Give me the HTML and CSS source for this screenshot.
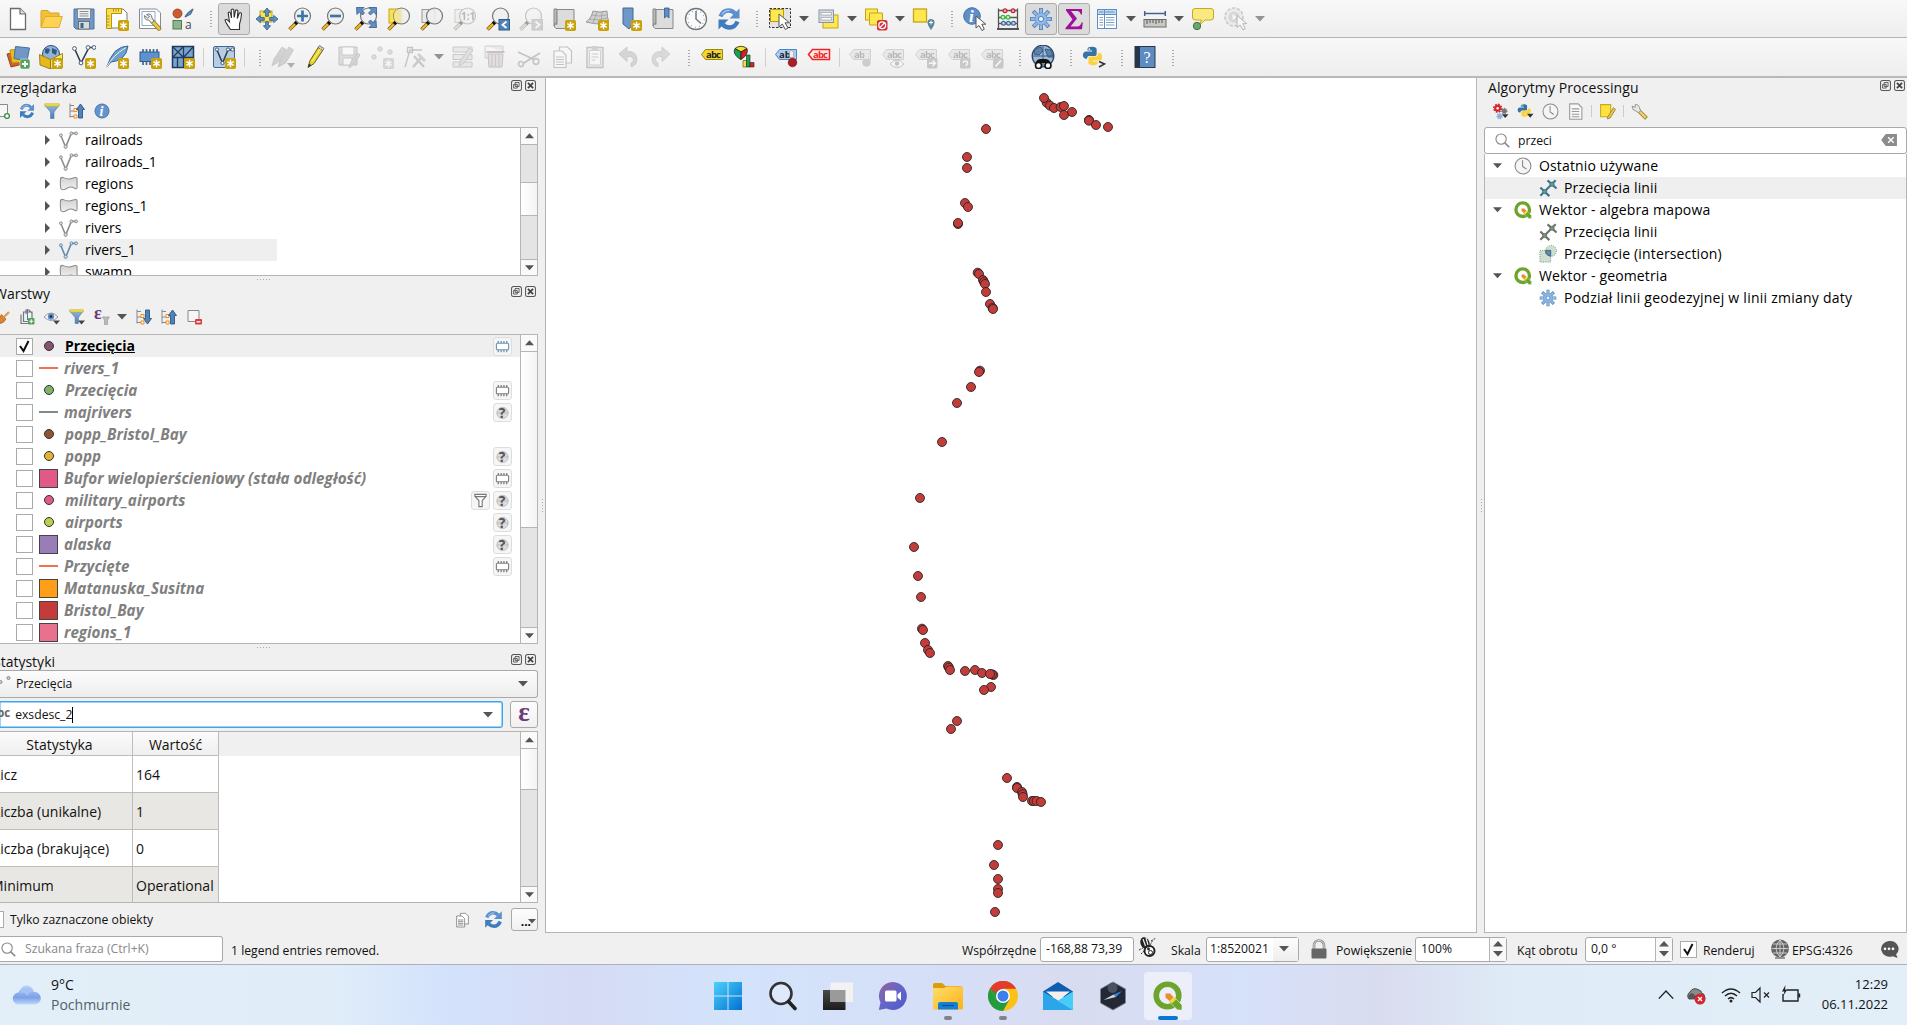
FILE: index.html
```html
<!DOCTYPE html>
<html lang="pl">
<head>
<meta charset="utf-8">
<title>QGIS</title>
<link rel="stylesheet" href="styles.css">
</head>
<body>
<svg class="paints" aria-hidden="true">
  <defs>
    <linearGradient id="gBlue" x1="0" y1="0" x2="0" y2="1"><stop offset="0" stop-color="#8fb4dc"/><stop offset="1" stop-color="#4c7db8"/></linearGradient>
    <linearGradient id="gPoly" x1="0" y1="0" x2="0" y2="1"><stop offset="0" stop-color="#d2d2d2"/><stop offset="1" stop-color="#f0f0f0"/></linearGradient>
    <linearGradient id="gWin" x1="0" y1="0" x2="1" y2="1"><stop offset="0" stop-color="#4cd2fb"/><stop offset="1" stop-color="#0170d2"/></linearGradient>
    <linearGradient id="gChat" x1="0" y1="0" x2="1" y2="1"><stop offset="0" stop-color="#9a5f9c"/><stop offset=".5" stop-color="#6267c8"/><stop offset="1" stop-color="#4f57c4"/></linearGradient>
    <linearGradient id="gFold" x1="0" y1="0" x2="1" y2="1"><stop offset="0" stop-color="#ffdc6e"/><stop offset="1" stop-color="#fbb414"/></linearGradient>
    <linearGradient id="gCloud" x1="0" y1="0" x2="0" y2="1"><stop offset="0" stop-color="#a9c3f3"/><stop offset=".6" stop-color="#7ba1e8"/><stop offset="1" stop-color="#c0d8fa"/></linearGradient>
    <linearGradient id="gDark" x1="0" y1="0" x2="0" y2="1"><stop offset="0" stop-color="#4a4a48"/><stop offset="1" stop-color="#1c1c1c"/></linearGradient>
  </defs>
</svg>
<svg class="symbols" aria-hidden="true">
  <symbol id="badge" viewBox="0 0 24 24"><rect x="13" y="13" width="11" height="11" rx="1.8" fill="#c8a30c"/><path d="M18.5 14.8v7.4M15.3 16.6l6.4 3.8M21.7 16.6l-6.4 3.8" stroke="#fff" stroke-width="1.5"/></symbol>
  <symbol id="new" viewBox="0 0 24 24"><path d="M4.5 1.5h9.5l5.5 5.5v15.500H4.500z" fill="#fff" stroke="#6b6b6b" stroke-width="1.3"/><path d="M14 1.500V7h5.500" fill="#ddd" stroke="#6b6b6b" stroke-width="1.200"/></symbol>
  <symbol id="open" viewBox="0 0 24 24"><path d="M2 20V4.500q0-1 1-1h6l2 2.500h9v4" fill="#f0bf3c" stroke="#d9a520"/><path d="M2 20.500L6 9.500h17.300L20 20.500z" fill="#fcd354" stroke="#dfae2e"/></symbol>
  <symbol id="save" viewBox="0 0 24 24"><path d="M2 2h20v20H4l-2-2z" fill="#6f98c8" stroke="#4b749f"/><rect x="5.500" y="2" width="13" height="9.500" fill="#f4f4f4" stroke="#6a6a6a" stroke-width=".7"/><path d="M7.500 4.500h9M7.500 6.800h9M7.500 9h9" stroke="#8a8a8a"/><rect x="6.500" y="14.500" width="11" height="7.500" fill="#dadada" stroke="#555" stroke-width=".7"/><rect x="8.500" y="16" width="3" height="5" fill="#3c6490"/></symbol>
  <symbol id="layout" viewBox="0 0 24 24"><path d="M2 2h16l4 4v15H2z" fill="#fff" stroke="#777"/><path d="M1.500 1.500h15v5H6.500v15h-5z" fill="#f8dc51" stroke="#b8960c"/><path d="M8.500 2v2.500M11 2v2.500M13.500 2v2.500M2 9h2.500M2 12h2.500M2 15h2.500M2 18h2.500" stroke="#9a7d10" stroke-width=".8"/><use href="#badge"/></symbol>
  <symbol id="layman" viewBox="0 0 24 24"><path d="M1.500 2h17l4 4v15.500h-21z" fill="#fff" stroke="#8a8a8a"/><path d="M4 4.500h13v14H4z" fill="#fff" stroke="#6f98c8" stroke-width=".8"/><path d="M14.500 14.500l6.500 7" stroke="#8a6d1c" stroke-width="4.400" stroke-linecap="round"/><path d="M14.500 14.500l6.500 7" stroke="#e9c94c" stroke-width="2.800" stroke-linecap="round"/><path d="M8.500 7.500q5-2 5.500 3.500l2 3-2.500 2-3-3q-4 .5-4-4.500l3 2.500 2-1.500z" fill="#eee" stroke="#777"/></symbol>
  <symbol id="style" viewBox="0 0 24 24"><circle cx="6.500" cy="6.500" r="4.500" fill="#cf5a31" stroke="#8d3b1c" stroke-width=".8"/><path d="M14 10l3-4 5-4-2.500 5z" stroke="#4c7099" fill="#7a9fc8" stroke-width="1.400"/><rect x="2" y="13.500" width="8.500" height="8.500" fill="#8fb58f" stroke="#4c7c50"/><text x="14" y="22" font-size="12" fill="#444">a</text></symbol>
  <symbol id="hand" viewBox="0 0 24 24"><path d="M8.500 23C6 19 3.500 16.500 3 13.500q1.500-1.500 3.500 1l1 1-1.300-9q1-2 2.300.3l1 4.700-.3-8q1.500-2 2.600 0l.4 7.500 1.300-7q1.800-1.400 2.400.5l-.6 7.500 2-5.500q1.800-.8 2.200 1-.3 5.500-2 10v5.500z" transform="translate(0 -.5)" fill="#fff" stroke="#333" stroke-width="1.100"/></symbol>
  <symbol id="panto" viewBox="0 0 24 24"><rect x="5" y="4" width="12" height="11" fill="#fbe24c" stroke="#c5a41a"/><path d="M12 1l3.600 4.300h-2.200v4h-2.800v-4H8.400zM12 23l3.600-4.300h-2.200v-4h-2.800v4H8.400zM1 12l4.300-3.600v2.200h4v2.800h-4v2.200zM23 12l-4.300-3.600v2.200h-4v2.800h4v2.200z" fill="#5f8fc4" stroke="#2d5a8c" stroke-width=".8"/></symbol>
  <symbol id="glass" viewBox="0 0 24 24"><path d="M1.500 22.500l7-7" stroke="#7a5c12" stroke-width="3.600"/><path d="M1.800 22.200l5.500-5.500" stroke="#f3b92c" stroke-width="2"/><path d="M7 17l2-2" stroke="#111" stroke-width="3.600"/><circle cx="14.500" cy="9" r="8" fill="#efefef" fill-opacity=".85" stroke="#777" stroke-width="1.200"/></symbol>
  <symbol id="zin" viewBox="0 0 24 24"><use href="#glass"/><path d="M14.500 3.500v11M9 9h11" stroke="#3f73ab" stroke-width="2.700"/></symbol>
  <symbol id="zout" viewBox="0 0 24 24"><use href="#glass"/><path d="M9 9h11" stroke="#3f73ab" stroke-width="2.700"/></symbol>
  <symbol id="zfull" viewBox="0 0 24 24"><use href="#glass"/><path d="M2.500.5h7.500L7.500 3l3 3-2 2-3-3L3 7.500zM22.500.5H15L17.500 3l-3 3 2 2 3-3L22.500 7.500zM22.500 20.500H15l2.500-2.500-3-3 2-2 3 3 2.500-2.500z" fill="#5f8fc4" stroke="#2f5c8f" stroke-width=".8"/></symbol>
  <symbol id="zsel" viewBox="0 0 24 24"><rect x="2" y="2" width="13" height="14" fill="#fbe24c" stroke="#c5a41a"/><use href="#glass"/><path d="M14 2.500v13h-5q-5-6.500 0-13z" fill="#f1e28c" opacity=".8"/></symbol>
  <symbol id="zlay" viewBox="0 0 24 24"><rect x="2" y="2.500" width="13" height="13" fill="#e8e8e8" stroke="#999"/><use href="#glass"/></symbol>
  <symbol id="znat" viewBox="0 0 24 24"><rect x="2" y="2.500" width="13" height="13" fill="#e8e8e8" stroke="#999"/><use href="#glass"/><text x="8" y="13" font-size="10" font-weight="700" fill="#555">1:1</text></symbol>
  <symbol id="zlast" viewBox="0 0 24 24"><use href="#glass"/><rect x="13" y="12.500" width="10.500" height="10.500" fill="#4f84b8" stroke="#2f5c8f"/><path d="M20.500 14.500l-4 3.300 4 3.200" fill="none" stroke="#fff" stroke-width="1.800"/></symbol>
  <symbol id="znext" viewBox="0 0 24 24"><use href="#glass"/><rect x="13" y="12.500" width="10.500" height="10.500" fill="#999" stroke="#888"/><path d="M16.500 14.500l4 3.300-4 3.200" fill="none" stroke="#fff" stroke-width="1.800"/></symbol>
  <symbol id="map" viewBox="0 0 24 24"><path d="M2 2h3v14q-3 0-3 3z" fill="#bbb" stroke="#888"/><path d="M5 2.500h17v19H4q-2-1-1.500-4 2-1 2.500 0z" fill="#dcdcdc" stroke="#888"/></symbol>
  <symbol id="newmap" viewBox="0 0 24 24"><use href="#map"/><use href="#badge"/></symbol>
  <symbol id="new3d" viewBox="0 0 24 24"><path d="M1 15Q6 12 8 4q7 2 14 0 0 7 2 11-7 4-23 0z" fill="#d0d0d0" stroke="#999"/><path d="M4 12q9 2 19-1M6.500 8q8 2 15 0M12 5l-4 11M17 5l-1 12" fill="none" stroke="#999" stroke-width=".7"/><use href="#badge"/></symbol>
  <symbol id="newbook" viewBox="0 0 24 24"><path d="M5 1h10v16l-4 5-6-5z" fill="#6f98c8" stroke="#3f6895"/><use href="#badge"/></symbol>
  <symbol id="book" viewBox="0 0 24 24"><use href="#map"/><path d="M13.500 1h4.500v10l-2.200-2-2.300 2z" fill="#5f8fc4" stroke="#2f5c8f" stroke-width=".8"/></symbol>
  <symbol id="clock" viewBox="0 0 24 24"><circle cx="12" cy="12" r="10.500" fill="#fbfbfb" stroke="#777" stroke-width="1.300"/><circle cx="12" cy="12" r="8.200" fill="none" stroke="#8ab0d8" stroke-width="1.300" stroke-dasharray="1 3.290"/><path d="M12 4v8l5 4.500" fill="none" stroke="#777" stroke-width="1.500"/></symbol>
  <symbol id="refresh" viewBox="0 0 24 24"><path d="M3.500 9.500Q6 3.500 11.500 3.500q4 0 6.500 3" fill="none" stroke="#5b90cc" stroke-width="4.400"/><path d="M22.500 1.500v10h-10z" fill="#5b90cc"/><path d="M20.500 14.500Q18 20.500 12.500 20.500q-4 0-6.500-3" fill="none" stroke="#3f7cbe" stroke-width="4.400"/><path d="M1.500 22.500v-10h10z" fill="#3f7cbe"/><path d="M5 7.500Q7.500 3 13 3.500" fill="none" stroke="#a9caec" stroke-width="1.200"/></symbol>
  <symbol id="cursor" viewBox="0 0 24 24"><path d="M12 8.500v12l3-2.500 3 5 2.300-1.300-2.500-5h4z" fill="#fff" stroke="#555"/></symbol>
  <symbol id="select" viewBox="0 0 24 24"><rect x="1.500" y="1.500" width="21" height="19" fill="#e4e4e4" stroke="#333" stroke-dasharray="2.500 1.500"/><rect x="2.500" y="2.500" width="13" height="12" fill="#fde94f" stroke="#b99d19"/><path d="M11 7v13l3.300-3 3 5.500 2.700-1.500-3-5.200h4.500z" fill="#fff" stroke="#555"/></symbol>
  <symbol id="selval" viewBox="0 0 24 24"><rect x="7" y="8" width="15" height="13" fill="#fde94f" stroke="#c5a41a"/><rect x="3" y="3" width="14.500" height="12.500" fill="#d8dde6" stroke="#8793a6"/><path d="M5 5.500h10.500v2.500H5zM5 10.500h10.500v2.500H5z" fill="#fff" stroke="#999" stroke-width=".7"/></symbol>
  <symbol id="desel" viewBox="0 0 24 24"><rect x="1.500" y="2" width="12" height="11" fill="#fde94f" stroke="#c5a41a"/><path d="M5.500 6h13v12h-13z" fill="#fde94f" stroke="#c5a41a"/><rect x="13" y="13" width="10.500" height="10.500" rx="2" fill="#d8323b"/><circle cx="18.200" cy="18.200" r="3.400" fill="none" stroke="#fff" stroke-width="1.300"/><path d="M15.800 20.600l4.800-4.800" stroke="#fff" stroke-width="1.300"/></symbol>
  <symbol id="selpin" viewBox="0 0 24 24"><rect x="1.500" y="2" width="13" height="13" fill="#fde94f" stroke="#c5a41a" stroke-width="1.300"/><path d="M19 23q-3.500-5-3.500-7.500a3.500 3.500 0 0 1 7 0Q22.500 18 19 23z" fill="#5c8599"/><path d="M19 13.500v4M17 15.500h4" stroke="#fff"/></symbol>
  <symbol id="ident" viewBox="0 0 24 24"><circle cx="9" cy="9" r="8.300" fill="#5f8fc8" stroke="#4171a8"/><text x="6" y="15" font-family="Liberation Serif" font-style="italic" font-weight="700" font-size="17" fill="#fff">i</text><use href="#cursor" x="1" y=".5"/></symbol>
  <symbol id="abac" viewBox="0 0 24 24"><path d="M2.500 1.500v20M21.500 1.500v20M2.500 3.500h19M2.500 10.500h19M2.500 16.500h19" fill="none" stroke="#555" stroke-width="1.300"/><path d="M1 21h22v2H1z" fill="#555"/><g stroke-width="1.200"><g fill="#f6a5a5" stroke="#c23"><circle cx="9" cy="3.800" r="1.900"/><circle cx="17" cy="3.800" r="1.900"/></g><g fill="#c5f3bf" stroke="#3b4"><circle cx="7" cy="10.300" r="1.900"/><circle cx="12" cy="10.300" r="1.900"/></g><g fill="#bcd9ee" stroke="#469"><circle cx="7.500" cy="16.300" r="1.900"/><circle cx="12.500" cy="16.300" r="1.900"/><circle cx="17.500" cy="16.300" r="1.900"/></g></g></symbol>
  <symbol id="gear" viewBox="0 0 24 24"><g stroke="#4f83bd" stroke-width="4"><path d="M12 1v22M1 12h22M4.200 4.200l15.600 15.600M19.800 4.200L4.200 19.800"/></g><g stroke="#93b8e4" stroke-width="2.400"><path d="M12 1.800v20.400M1.800 12h20.400M4.800 4.800l14.400 14.400M19.200 4.800L4.800 19.200"/></g><circle cx="12" cy="12" r="6" fill="#93b8e4" stroke="#6a98cf" stroke-width=".7"/><circle cx="12" cy="12" r="2.600" fill="#eaf1fa" stroke="#4f83bd"/></symbol>
  <symbol id="sigma" viewBox="0 0 24 24"><path d="M4 2h16v5.500h-1.200Q18 4 15 4H9l6 7.500L8.500 19.500H15q3.500 0 4.500-4h1.300L20 22.300H3.500v-1.300l7-8.500L4 3.500z" fill="#a0109c"/></symbol>
  <symbol id="table" viewBox="0 0 24 24"><rect x="2.500" y="2.500" width="19" height="19" fill="#fff" stroke="#5d8fc2"/><path d="M3 3h18v4H3z" fill="#c3daf0"/><path d="M4 5h4.500M10.500 5h9M2.500 7.500h19M9.500 3v18" stroke="#5d8fc2"/><path d="M4.500 10.500h3.500M11 10.500h8.500M4.500 13h3.500M11 13h8.500M4.500 15.500h3.500M11 15.500h8.500M4.500 18h3.500M11 18h8.500" stroke="#7ba3cd" stroke-width="1.200"/></symbol>
  <symbol id="ruler" viewBox="0 0 24 24"><path d="M2 6.500h20M1.700 4v5M22.300 4v5" stroke="#42658c" stroke-width="1.500"/><rect x="1" y="12.500" width="22" height="7.500" fill="#c9c9c4" stroke="#6a6a6a"/><path d="M4 13v4M7 13v3M10 13v3M13 13v4M16 13v3M19 13v3" stroke="#555"/></symbol>
  <symbol id="tip" viewBox="0 0 24 24"><path d="M4 1.500h16q2.500 0 2.500 2.500v6q0 3-2.500 3h-6L8 18.500 10.500 13H4q-2.500 0-2.500-3V4Q1.500 1.500 4 1.500z" fill="#f8ea80" stroke="#c9a91c"/><circle cx="6" cy="19" r="3.700" fill="#6aa56c" stroke="#3b7a44"/></symbol>
  <symbol id="action" viewBox="0 0 24 24"><circle cx="10" cy="10" r="9" fill="#ddd" stroke="#888" stroke-width="1.600" stroke-dasharray="3.500 1.500"/><circle cx="10" cy="10" r="5.500" fill="#aaa"/><path d="M8.500 7v6l4.500-3z" fill="#fff"/><use href="#cursor" x="1"/></symbol>

  <symbol id="dsm" viewBox="0 0 24 24"><path d="M1 9l13-3 3 13-12 3z" fill="#cd5f33" stroke="#9c4420"/><path d="M4 5l13-1 1 13-12 1z" fill="#eebd18" stroke="#b68d0d"/><path d="M9.500 1.500L23.500 3 21 16 8 13.500z" fill="#6f98c8" stroke="#456f9f"/><rect x="14" y="14" width="10" height="10" rx="2" fill="#58a05a" stroke="#fff" stroke-width=".5"/><path d="M19 16v6M16 19h6" stroke="#fff" stroke-width="1.800"/></symbol>
  <symbol id="gpkg" viewBox="0 0 24 24"><circle cx="12" cy="9" r="8.500" fill="#8fb4dc" stroke="#2d4f75"/><path d="M6 4q4-2 5 1l-2 4-3-1zM13 3l5 2-1 5-4-2z" fill="#35587f"/><path d="M.5 9.500l11 5V24L1 20z" fill="#e5b81c" stroke="#8a6d10" stroke-width=".8"/><path d="M11.500 14.500l12-6V20l-12 4z" fill="#fbe668" stroke="#8a6d10" stroke-width=".8"/><use href="#badge"/></symbol>
  <symbol id="vec" viewBox="0 0 24 24"><path d="M2.500 3.500L9 18 17 2.500h5" fill="none" stroke="#2c3e50" stroke-width="1.600"/><g fill="#fff" stroke="#445c78"><circle cx="2.500" cy="3.500" r="1.900"/><circle cx="9" cy="18" r="1.900"/><circle cx="16" cy="2.500" r="1.900"/><circle cx="22" cy="2.500" r="1.900"/></g></symbol>
  <symbol id="newvec" viewBox="0 0 24 24"><use href="#vec"/><use href="#badge"/></symbol>
  <symbol id="feather" viewBox="0 0 24 24"><path d="M1.500 22.500Q5 12 10 6.500 16 1 23 1q-1 8-6 12-6 4-11 4z" fill="#6f9fce" stroke="#3a6796"/><path d="M1 23Q8 10 21 2.500" fill="none" stroke="#e8f0f8"/><use href="#badge"/></symbol>
  <symbol id="chip" viewBox="0 0 24 24"><path d="M5 4v16M8.500 4v16M12 4v16M15.500 4v16M19 4v16" stroke="#46698f" stroke-width="1.700"/><rect x="2" y="7" width="19" height="9.500" fill="#5f92cc" stroke="#2e5c8e"/><use href="#badge"/></symbol>
  <symbol id="mesh" viewBox="0 0 24 24"><path d="M1.500 1.500h21v21h-21z" fill="#7ba3cf" stroke="#1f3c5c" stroke-width="1.500"/><path d="M12.500 1.500v21M1.500 12.500h21M1.500 1.500l11 11M12.500 1.500l-11 11M22.500 1.500l-10 11M6.500 12.500v10" stroke="#1f3c5c" stroke-width="1.300"/><use href="#badge"/></symbol>
  <symbol id="virt" viewBox="0 0 24 24"><rect x="1.500" y="1.500" width="21" height="21" rx="1.500" fill="#b7cde4" stroke="#40678f"/><path d="M5 5l5.500 13L16 5h4" fill="none" stroke="#2c3e50" stroke-width="1.500"/><g fill="#fff" stroke="#445c78"><circle cx="5" cy="4.500" r="1.600"/><circle cx="10.500" cy="18" r="1.600"/><circle cx="16" cy="4.500" r="1.600"/><circle cx="20.500" cy="4.500" r="1.600"/></g><use href="#badge"/></symbol>
  <symbol id="pencil" viewBox="0 0 24 24"><path d="M4 22.500l2-7L14.500 2l4.500 3L10 18.500z" fill="#e8d22c" stroke="#6c6312"/><path d="M14 2.500l1.500-2 4.500 3-1.500 2z" fill="#ccc" stroke="#666" stroke-width=".8"/><path d="M4 22.500l1-4 2.500 1.700z" fill="#333"/><path d="M8 16.500l8.500-13" stroke="#fff6a0"/></symbol>
  <symbol id="pencils" viewBox="0 0 24 24"><path d="M1 21l2-7L11 2l4 2.500L7 17zM7 22l2-7L18 2l4.500 3-8 13z" fill="#a99" stroke="#887"/><path d="M16 18h8l-4 5z" fill="#444"/></symbol>
  <symbol id="saveoff" viewBox="0 0 24 24"><path d="M2 2h18v18H2z" fill="#bbb" stroke="#777"/><path d="M5 2h12v8H5zM6 13h9v7H6z" fill="#fff" stroke="#888"/><path d="M12 23l2-6 6-9 3 2-6 9z" fill="#c99" stroke="#977"/></symbol>
  <symbol id="addpt" viewBox="0 0 24 24"><g fill="#bbb" stroke="#888"><circle cx="4" cy="12" r="2.200"/><circle cx="10" cy="4" r="2.200"/><circle cx="20" cy="7" r="2.200"/></g><rect x="13" y="13" width="11" height="11" rx="1.800" fill="#a8a890"/><path d="M18.500 14.800v7.400M15.300 16.600l6.400 3.800M21.700 16.600l-6.400 3.800" stroke="#fff" stroke-width="1.500"/></symbol>
  <symbol id="vertex" viewBox="0 0 24 24"><path d="M2 22L7 5h12M4.500 2.500h5v5h-5z" fill="none" stroke="#777" stroke-width="1.300"/><path d="M10 22l8-9M11 11l10 11" stroke="#887" stroke-width="2.500"/><path d="M15 9l7 7" stroke="#999" stroke-width="3"/></symbol>
  <symbol id="multi" viewBox="0 0 24 24"><path d="M2 2h19v5H2zM2 9.500h19v5H2zM2 17h19v5H2z" fill="#ddd8c0" stroke="#888"/><path d="M8 21l2-6L18 3l4 2-9 13z" fill="#cbb" stroke="#988"/></symbol>
  <symbol id="trash" viewBox="0 0 24 24"><path d="M1 1h18v5M1 1v12h3" fill="#ddd8c0" stroke="#999"/><path d="M4 9h15l-1 13H5z" fill="#e0b8b8" stroke="#a66"/><path d="M2.500 7h18" stroke="#a66" stroke-width="2"/><path d="M8 10v11M11.500 10v11M15 10v11" stroke="#b77"/></symbol>
  <symbol id="cut" viewBox="0 0 24 24"><path d="M1 7l16 7.500M6 18.500L23 8" stroke="#777" stroke-width="1.700"/><circle cx="19" cy="16.500" r="2.800" fill="none" stroke="#977" stroke-width="1.700"/><circle cx="4" cy="19" r="2.500" fill="none" stroke="#977" stroke-width="1.700"/></symbol>
  <symbol id="copy" viewBox="0 0 24 24"><g fill="#fff" stroke="#777" stroke-width="1.200"><path d="M9.500 2h8l4 4v12h-12z"/><path d="M4 6h8l4 4v12.500H4z"/><path d="M6 12h8M6 14.500h8M6 17h8M6 19.500h8"/></g></symbol>
  <symbol id="paste" viewBox="0 0 24 24"><path d="M4 2.500h16v20H4z" fill="#ddd" stroke="#777" stroke-width="1.400"/><path d="M6.500 5.500h11V20h-11z" fill="#fff" stroke="#999"/><path d="M9 1h6v4H9z" fill="#999"/><path d="M8.500 9h7M8.500 12h7M8.500 15h4" stroke="#888"/></symbol>
  <symbol id="undo" viewBox="0 0 24 24"><path d="M3 9l8-7v4.500q10-.5 10 8.500-1 6-6 6.500v-3.500q2.500-1 2.500-3.500-.5-3.500-6.500-3v5z" fill="#b99f9f" stroke="#988"/></symbol>
  <symbol id="redo" viewBox="0 0 24 24"><path d="M21 9l-8-7v4.500Q3 6 3 15q1 6 6 6.500v-3.500Q6.500 17 6.500 14.500q.5-3.500 6.500-3v5z" fill="#a9b0a9" stroke="#898"/></symbol>
  <symbol id="tag" viewBox="0 0 24 24"><path d="M1.500 9.500l4-5h17v10h-17z" fill="#f2d62e" stroke="#9f8411"/><text x="6" y="13" font-size="9.500" font-weight="700" fill="#222" textLength="15">abc</text></symbol>
  <symbol id="diag" viewBox="0 0 24 24"><path d="M8 7L2 3.500Q8-1 14 3.500z" fill="#f7e22b" stroke="#222" stroke-width=".8"/><path d="M8 7L2 3.500Q-1 9 7.500 14.500z" fill="#12a650" stroke="#222" stroke-width=".8"/><path d="M8 7l6-3.500q2 6-6 11z" fill="#d22222" stroke="#222" stroke-width=".8"/><path d="M10 15.500h3.500V22H10z" fill="#f7e22b" stroke="#444" stroke-width=".6"/><path d="M13.500 10H17v12h-3.500z" fill="#12a650" stroke="#222" stroke-width=".6"/><path d="M17 17.500h4V22h-4z" fill="#d22" stroke="#222" stroke-width=".6"/></symbol>
  <symbol id="tagpin" viewBox="0 0 24 24"><path d="M1.500 9.500l4-5h17v10h-17z" fill="#a9cdf4" stroke="#4a84c4"/><text x="5" y="13" font-size="9.500" font-weight="700" fill="#222">ab</text><path d="M17.500 5.500q3 0 1.800 7h-3.600q-1.200-7 1.800-7" fill="#eee" stroke="#999" stroke-width=".6"/><circle cx="18.500" cy="17.500" r="4.300" fill="#a92024" stroke="#701" stroke-width=".6"/></symbol>
  <symbol id="tagred" viewBox="0 0 24 24"><path d="M1.500 9.500l4-5h17v10h-17z" fill="#fde8e8" stroke="#e22" stroke-width="1.500"/><text x="6" y="13" font-size="9.500" font-weight="700" fill="#e22" textLength="15">abc</text></symbol>
  <symbol id="tagoff" viewBox="0 0 24 24"><path d="M1.500 9.500l4-5h17v10h-17z" fill="#ddd8b8" stroke="#999"/><text x="6" y="13" font-size="9.500" font-weight="700" fill="#555" textLength="15">abc</text></symbol>
  <symbol id="toff1" viewBox="0 0 24 24"><use href="#tagoff"/><circle cx="18.500" cy="17.500" r="4.300" fill="#a88"/><path d="M16.500 5h3.500v9h-3.500z" fill="#ddd"/></symbol>
  <symbol id="toff2" viewBox="0 0 24 24"><use href="#tagoff"/><path d="M9 19q7-8 14 0-7 7-14 0z" fill="#fff" stroke="#777"/><circle cx="16" cy="18.500" r="2.200" fill="#777"/></symbol>
  <symbol id="toff3" viewBox="0 0 24 24"><use href="#tagoff"/><rect x="13" y="13" width="10.500" height="10.500" rx="1.500" fill="#888"/><path d="M15 18.200h6M18.500 15.500l3 2.700-3 2.800" fill="none" stroke="#fff" stroke-width="1.500"/></symbol>
  <symbol id="toff4" viewBox="0 0 24 24"><use href="#tagoff"/><rect x="13" y="13" width="10.500" height="10.500" rx="1.500" fill="#888"/><path d="M16 18q1-3 4-1.500 1.500 2.500-1.500 4.500" fill="none" stroke="#fff" stroke-width="1.500"/></symbol>
  <symbol id="toff5" viewBox="0 0 24 24"><use href="#tagoff"/><rect x="13" y="13" width="10.500" height="10.500" rx="1.500" fill="#888"/><path d="M15.500 21.500l5.500-6" stroke="#fff" stroke-width="1.800"/></symbol>
  <symbol id="osm" viewBox="0 0 24 24"><circle cx="12" cy="11" r="10.800" fill="#9dbbdb" stroke="#2b4361" stroke-width="1.300"/><path d="M4 4l6-2 2 4-4 4-5-1zM14 4l6 1 2 7-5 0zM1.500 11h21M12 0v22" fill="#5d83ac" stroke="#3b5c83"/><path d="M4 21q0-6 5-7h6q5 1 5 7l-6-1v-2h-4v2z" fill="#111"/><circle cx="7.500" cy="20.500" r="3" fill="#fff" stroke="#111" stroke-width="1.600"/><circle cx="17" cy="20.500" r="3" fill="#fff" stroke="#111" stroke-width="1.600"/></symbol>
  <symbol id="py" viewBox="0 0 24 24"><path d="M11 2q5 0 5 3v5q0 2-2.500 2H8q-2.500 0-2.500 3H4Q1 14.500 1 11t3-4h7V6H6V4.500Q6 2 11 2z" fill="#3873a5"/><path d="M12 22q-5 0-5-3v-4q0-2.500 2.500-2.500H15q2.500 0 2.500-4H19q3 .5 3 4.500t-3 4h-7v1h5v1.500q0 2.500-5 2.500z" fill="#fdd23e"/><circle cx="8" cy="4.500" r=".9" fill="#fff"/></symbol>
  <symbol id="pycon" viewBox="0 0 24 24"><use href="#py" x="0" y="0" width="22" height="22"/><path d="M17 16.500l5.500 2.500-5.500 3" fill="none" stroke="#333" stroke-width="1.500"/></symbol>
  <symbol id="help" viewBox="0 0 24 24"><rect x="2" y="1.500" width="20" height="21" fill="#5d8cc2" stroke="#2c3848"/><path d="M2 1.500h5v21H2z" fill="#25364b"/><text x="10.500" y="17.500" font-size="16" font-family="Liberation Serif" fill="#fff">?</text></symbol>

  <symbol id="dd" viewBox="0 0 10 6"><path d="M0 0h10L5 5.500z" fill="#555"/></symbol>
  <symbol id="up" viewBox="0 0 10 6"><path d="M0 5.500h10L5 0z" fill="#555"/></symbol>
  <symbol id="float" viewBox="0 0 12 12"><rect x=".6" y=".6" width="10.800" height="10.800" rx="2.200" fill="none" stroke="#555" stroke-width="1.100"/><path d="M4.500 2.700h4.300v4.300H4.500zM2.800 4.800h4v4h-4z" fill="#f0f0f0" stroke="#555"/></symbol>
  <symbol id="close" viewBox="0 0 12 12"><rect x=".6" y=".6" width="10.800" height="10.800" rx="2.200" fill="none" stroke="#555" stroke-width="1.100"/><path d="M3.200 3.200l5.600 5.600M8.800 3.200L3.200 8.800" stroke="#444" stroke-width="2"/></symbol>
  <symbol id="addl" viewBox="0 0 16 16"><path d="M0 1.500h13.500v12H0" fill="#fff" fill-opacity=".4" stroke="#888"/><circle cx="13" cy="13" r="2.400" fill="#fff" stroke="#3b9046" stroke-width="1.400"/></symbol>
  <symbol id="funnel" viewBox="0 0 16 16"><path d="M1 2.500h14L10 9v6.500H6.500V9z" fill="url(#gBlue)" stroke="#4a78ac" stroke-width=".6"/><path d="M.8.800h14.400v2.400H.8z" fill="#f4e24a" stroke="#bba51c" stroke-width=".6"/></symbol>
  <symbol id="treeup" viewBox="0 0 16 16"><path d="M1 .5v14M1 2.500h4M1 8h4M1 13.500h4" stroke="#888"/><path d="M5 5.500h3v3H5zM5 12h3v3H5z" fill="#fff" stroke="#f08a1c"/><path d="M11.500 1l4 5.500h-2V15h-4V6.500h-2z" fill="#4f84bb" stroke="#2c5684" stroke-width=".9"/></symbol>
  <symbol id="treedn" viewBox="0 0 16 16"><path d="M1 .5v14M1 2.500h4M1 8h4M1 13.500h4" stroke="#888"/><path d="M5 5.500h3v3H5zM5 12h3v3H5z" fill="#fff" stroke="#f08a1c"/><path d="M11.500 15l4-5.500h-2V1h-4v8.500h-2z" fill="#4f84bb" stroke="#2c5684" stroke-width=".9"/></symbol>
  <symbol id="info" viewBox="0 0 16 16"><circle cx="8" cy="8" r="7" fill="#6494cc" stroke="#4675ab"/><text x="5.500" y="13" font-family="Liberation Serif" font-style="italic" font-weight="700" font-size="14" fill="#fff">i</text></symbol>
  <symbol id="brush" viewBox="0 0 16 16"><path d="M0 3.500q5-1 8 4l-2 4H0z" fill="#fbe24c"/><path d="M7.500 5.500l4.500 4.500q-2 4-6 4.500l-3-3q3-2 4.500-6z" fill="#d8853a" stroke="#a65a1c" stroke-width=".7"/><path d="M10 8l5-5" stroke="#d8a35a" stroke-width="2.400"/></symbol>
  <symbol id="addgrp" viewBox="0 0 16 16"><path d="M2 5.500v9h8M4.500 3v9.500h8.500V3zM7 5V1h3l3 3" fill="none" stroke="#777" stroke-width="1.200"/><path d="M8.500 0v11" stroke="#4a78ac"/><rect x="9" y="9" width="6.500" height="6.500" rx="1" fill="#58a05a"/><path d="M12.300 10.300v4M10.300 12.300h4" stroke="#fff"/></symbol>
  <symbol id="eye" viewBox="0 0 16 16"><path d="M0 8q7-8 14 0-7 7-14 0z" fill="#f6f6f6" stroke="#999"/><circle cx="7" cy="7.500" r="3.200" fill="#5f8fc4"/><circle cx="7" cy="7.500" r="1.300" fill="#223"/><path d="M9 11.500h7l-3.500 4z" fill="#444"/></symbol>
  <symbol id="funneldd" viewBox="0 0 16 16"><use href="#funnel" width="15" height="15"/><path d="M9 11.500h7l-3.500 4z" fill="#444"/></symbol>
  <symbol id="epsf" viewBox="0 0 16 16"><text x="0" y="10" font-size="18" font-family="Liberation Serif" font-weight="700" fill="#6c3a78">ε</text><path d="M8.500 8h7l-2 3V15.500h-3V11z" fill="#bbb" stroke="#999" stroke-width=".7"/></symbol>
  <symbol id="remove" viewBox="0 0 16 16"><path d="M2 1.500h11v11H2z" fill="#f6f6f6" stroke="#888"/><rect x="9" y="10" width="7" height="5.500" rx="1" fill="#e03a3f"/><path d="M10.500 12.800h4" stroke="#fff" stroke-width="1.400"/></symbol>
  <symbol id="line" viewBox="0 0 20 20"><path d="M2 5l5 12L13 2.500h5" fill="none" stroke="currentColor" stroke-width="1.600"/><g fill="#ddd" stroke="currentColor"><circle cx="2" cy="4.500" r="1.500"/><circle cx="7" cy="16.500" r="1.700"/><circle cx="13" cy="2.500" r="1.500"/><circle cx="18" cy="2.500" r="1.500"/></g></symbol>
  <symbol id="poly" viewBox="0 0 20 20"><path d="M1.500 4.500q0-2 2.500-2 6 3 10 1 5-2 5 .5v8.500q0 3-2.500 1.500-4.500-3-9 .5-4 2-5.500 0-1-5-.500-10z" fill="url(#gPoly)" stroke="#8b8b8b" stroke-width="1.100"/></symbol>
  <symbol id="mem" viewBox="0 0 16 16"><path d="M3.500 2v12M6.500 2v12M9.500 2v12M12.500 2v12" stroke="currentColor" stroke-width="1.400"/><rect x="1.500" y="4.500" width="13" height="7" rx="1" fill="#fff" stroke="currentColor" stroke-width="1.200"/></symbol>
  <symbol id="q" viewBox="0 0 16 16"><circle cx="8" cy="8.500" r="6" fill="#ddd" stroke="#bbb"/><path d="M2 8.500h12M8 2.500v12" stroke="#bbb"/><text x="4" y="13.500" font-size="15" font-weight="700" fill="#555">?</text></symbol>
  <symbol id="filt" viewBox="0 0 16 16"><path d="M2 1.500h12v2L9.800 8v6.500H6.300V8L2 3.500zM2 3.800h12" fill="#fff" stroke="#777" stroke-width="1.200"/></symbol>
  <symbol id="search" viewBox="0 0 16 16"><circle cx="6.500" cy="6.500" r="5.500" fill="none" stroke="#888" stroke-width="1.200"/><path d="M10.500 10.500l4.700 4.700" stroke="#888" stroke-width="1.700"/></symbol>
  <symbol id="pclock" viewBox="0 0 20 20"><circle cx="10" cy="10" r="8.800" fill="#f4f6f6" stroke="#8a8a8a" stroke-width="1.200"/><path d="M9.500 3.500v7l4.500 3" fill="none" stroke="#888" stroke-width="1.200"/></symbol>
  <symbol id="doc" viewBox="0 0 16 16"><path d="M2.500.8h8l3.500 3.500v11H2.500z" fill="#f8f8f8" stroke="#999"/><path d="M4.500 5.500h7M4.500 8h7M4.500 10.500h7M4.500 13h7" stroke="#999"/></symbol>
  <symbol id="gears" viewBox="0 0 18 18"><circle cx="6" cy="5.500" r="3.600" fill="#d22a30" stroke="#d22a30" stroke-width="2.600" stroke-dasharray="1.700 1.100"/><circle cx="6" cy="5.500" r="1.300" fill="#fff"/><circle cx="13" cy="8.500" r="2.400" fill="#777" stroke="#777" stroke-width="2" stroke-dasharray="1.200 .8"/><circle cx="8" cy="14" r="2.400" fill="#8fb2e0" stroke="#8fb2e0" stroke-width="2" stroke-dasharray="1.200 .8"/><path d="M10.500 12h7l-3.500 4z" fill="#333"/></symbol>
  <symbol id="pydd" viewBox="0 0 18 18"><use href="#py" width="16" height="16"/><path d="M10.500 11.500h7l-3.500 4z" fill="#333"/></symbol>
  <symbol id="editp" viewBox="0 0 16 16"><path d="M1.500 1.500h9.500v9.500l-2.500 2h-7z" fill="#fde43c" stroke="#c9a91c"/><path d="M8 13.500l5.500-9 2 1.500-5 8-2.500 1z" fill="#f2c64a" stroke="#8a6d1c" stroke-width=".7"/></symbol>
  <symbol id="wrench" viewBox="0 0 16 16"><path d="M7 7l7.500 7.500" stroke="#8a6d1c" stroke-width="3.600"/><path d="M7.500 7.500l6.500 6.500" stroke="#eed466" stroke-width="2.400"/><path d="M1 3l3 1V1.500Q7 1 8 4.500l1 3-2 1.500L4.500 7.500Q1 7 1 3z" fill="#e8e8e8" stroke="#888" stroke-width=".8"/></symbol>
  <symbol id="clear" viewBox="0 0 18 14"><path d="M5 0h12v13H5L0 6.500z" fill="#8c8c8c"/><path d="M7.500 3.500l6 6M13.500 3.500l-6 6" stroke="#fff" stroke-width="1.500"/></symbol>
  <symbol id="cross" viewBox="0 0 20 20"><path d="M1.500 18.500L18.500 1.500M1.500 9.500l10 9.500M9.500 1.500l10 9" fill="none" stroke="currentColor" stroke-width="2.400"/><circle cx="6.300" cy="14" r="2.300" fill="#5fa36b" stroke="currentColor"/><circle cx="14.500" cy="5.800" r="2.300" fill="#5fa36b" stroke="currentColor"/></symbol>
  <symbol id="inter" viewBox="0 0 20 20"><path d="M1 6h12v13H1z" fill="#cfdfcf" stroke="#6b7f6b" stroke-dasharray="1 1.500"/><circle cx="13.500" cy="6.500" r="6" fill="#cfdfcf" stroke="#6b7f6b" stroke-dasharray="1 1.500"/><path d="M7.500 6h5.500v6.500q-4-.5-5.500-3.500z" fill="#5d8aa8" stroke="#3a5f80"/></symbol>
  <symbol id="qgis" viewBox="0 0 30 30"><circle cx="14.500" cy="14.500" r="11.300" fill="none" stroke="#6da52c" stroke-width="5.600"/><path d="M16.500 16.500h5l7.500 7.500v5h-4.500l-8-8z" fill="#6da52c" stroke="#e9eef8" stroke-width=".6"/><path d="M12.500 12.500h4.500l3.500 3.500-4 4-4-3.500z" fill="#f08a2c"/><path d="M16.500 20l4-4 2.500 2.500-4 4z" fill="#f5d83c"/></symbol>
  <symbol id="bug" viewBox="0 0 20 20"><ellipse cx="7" cy="6" rx="4.500" ry="6" transform="rotate(-20 7 6)" fill="#222"/><path d="M5 2l2.500 7M8 1l2 7" stroke="#eee" stroke-width="1.200"/><path d="M13 4l5-3M12 8l3-5M1 13l4-2M3 17l4-4" stroke="#333" stroke-dasharray="2 1"/><circle cx="11.500" cy="14" r="5" fill="#fff" stroke="#222" stroke-width="2"/><circle cx="10.500" cy="12" r="1.400" fill="#222"/><circle cx="12.500" cy="15.500" r="2" fill="none" stroke="#222"/></symbol>
  <symbol id="lock" viewBox="0 0 16 20"><path d="M3 10V6.500a5 5 0 0 1 10 0V10" fill="none" stroke="#888" stroke-width="2.600"/><path d="M3 10V6.500a5 5 0 0 1 10 0V10" fill="none" stroke="#ddd" stroke-width="1"/><rect x=".5" y="9.500" width="15" height="10" rx="1" fill="#666"/></symbol>
  <symbol id="globe" viewBox="0 0 20 20"><circle cx="10" cy="9.500" r="9" fill="#666"/><path d="M1.500 9.500h17M3 5h14M3 14h14M10 1v17M10 1q-8 8.500 0 17M10 1q8 8.500 0 17" fill="none" stroke="#eee" stroke-width=".7"/><path d="M5 19h10" stroke="#777" stroke-width="1.500"/></symbol>
  <symbol id="bubble" viewBox="0 0 20 20"><path d="M10 1a9 8.300 0 1 0 4 16l5 2-1.500-4A9 8.300 0 0 0 10 1z" fill="#555"/><circle cx="5.800" cy="9.300" r="1.400" fill="#fff"/><circle cx="10" cy="9.300" r="1.400" fill="#fff"/><circle cx="14.200" cy="9.300" r="1.400" fill="#fff"/></symbol>
</svg>

<div class="screen">
  <div class="toolbar">
    <span class="tb"><svg><use href="#new"/></svg></span><span class="tb"><svg><use href="#open"/></svg></span><span class="tb"><svg><use href="#save"/></svg></span><span class="tb"><svg><use href="#layout"/></svg></span><span class="tb"><svg><use href="#layman"/></svg></span><span class="tb"><svg><use href="#style"/></svg></span>
    <i class="grip"></i>
    <span class="tb on"><svg><use href="#hand"/></svg></span><span class="tb"><svg><use href="#panto"/></svg></span><span class="tb"><svg><use href="#zin"/></svg></span><span class="tb"><svg><use href="#zout"/></svg></span><span class="tb"><svg><use href="#zfull"/></svg></span><span class="tb"><svg><use href="#zsel"/></svg></span><span class="tb"><svg><use href="#zlay"/></svg></span><span class="tb off"><svg><use href="#znat"/></svg></span><span class="tb"><svg><use href="#zlast"/></svg></span><span class="tb off"><svg><use href="#znext"/></svg></span><span class="tb"><svg><use href="#newmap"/></svg></span><span class="tb"><svg><use href="#new3d"/></svg></span><span class="tb"><svg><use href="#newbook"/></svg></span><span class="tb"><svg><use href="#book"/></svg></span><span class="tb"><svg><use href="#clock"/></svg></span><span class="tb"><svg><use href="#refresh"/></svg></span>
    <i class="grip"></i>
    <span class="tb"><svg><use href="#select"/></svg></span><span class="drop"><svg><use href="#dd"/></svg></span><span class="tb"><svg><use href="#selval"/></svg></span><span class="drop"><svg><use href="#dd"/></svg></span><span class="tb"><svg><use href="#desel"/></svg></span><span class="drop"><svg><use href="#dd"/></svg></span><span class="tb"><svg><use href="#selpin"/></svg></span>
    <i class="grip"></i>
    <span class="tb"><svg><use href="#ident"/></svg></span><span class="tb"><svg><use href="#abac"/></svg></span><span class="tb on"><svg><use href="#gear"/></svg></span><span class="tb on"><svg><use href="#sigma"/></svg></span><span class="tb"><svg><use href="#table"/></svg></span><span class="drop"><svg><use href="#dd"/></svg></span><span class="tb"><svg><use href="#ruler"/></svg></span><span class="drop"><svg><use href="#dd"/></svg></span><span class="tb"><svg><use href="#tip"/></svg></span><span class="tb off"><svg><use href="#action"/></svg></span><span class="drop mid"><svg><use href="#dd"/></svg></span>
  </div>
  <div class="toolbar">
    <span class="tb"><svg><use href="#dsm"/></svg></span><span class="tb"><svg><use href="#gpkg"/></svg></span><span class="tb"><svg><use href="#newvec"/></svg></span><span class="tb"><svg><use href="#feather"/></svg></span><span class="tb"><svg><use href="#chip"/></svg></span><span class="tb"><svg><use href="#mesh"/></svg></span>
    <i class="vsep"></i><span class="tb"><svg><use href="#virt"/></svg></span><i class="vsep"></i><i class="grip"></i>
    <span class="tb off"><svg><use href="#pencils"/></svg></span><span class="tb"><svg><use href="#pencil"/></svg></span><span class="tb off"><svg><use href="#saveoff"/></svg></span><span class="tb off"><svg><use href="#addpt"/></svg></span><span class="tb off"><svg><use href="#vertex"/></svg></span><span class="drop mid"><svg><use href="#dd"/></svg></span><span class="tb off"><svg><use href="#multi"/></svg></span><span class="tb off"><svg><use href="#trash"/></svg></span><span class="tb off"><svg><use href="#cut"/></svg></span><span class="tb off"><svg><use href="#copy"/></svg></span><span class="tb off"><svg><use href="#paste"/></svg></span><span class="tb off"><svg><use href="#undo"/></svg></span><span class="tb off"><svg><use href="#redo"/></svg></span>
    <i class="grip"></i>
    <span class="tb"><svg><use href="#tag"/></svg></span><span class="tb"><svg><use href="#diag"/></svg></span><i class="vsep"></i><span class="tb"><svg><use href="#tagpin"/></svg></span><span class="tb"><svg><use href="#tagred"/></svg></span><i class="vsep"></i>
    <span class="tb off"><svg><use href="#toff1"/></svg></span><span class="tb off"><svg><use href="#toff2"/></svg></span><span class="tb off"><svg><use href="#toff3"/></svg></span><span class="tb off"><svg><use href="#toff4"/></svg></span><span class="tb off"><svg><use href="#toff5"/></svg></span>
    <i class="grip"></i><span class="tb"><svg><use href="#osm"/></svg></span><i class="grip"></i><span class="tb"><svg><use href="#pycon"/></svg></span><i class="grip"></i><span class="tb"><svg><use href="#help"/></svg></span><i class="grip"></i>
  </div>

  <div class="main">
    <div class="left">
      <section class="dock browser">
        <header class="title"><span class="cut8">Przeglądarka</span><span class="wins"><svg><use href="#float"/></svg><svg><use href="#close"/></svg></span></header>
        <div class="tools"><svg><use href="#addl"/></svg><svg><use href="#refresh"/></svg><svg><use href="#funnel"/></svg><svg><use href="#treeup"/></svg><svg><use href="#info"/></svg></div>
        <div class="box">
          <ul class="tree">
            <li><i class="tri"></i><svg><use href="#line"/></svg>railroads</li>
            <li><i class="tri"></i><svg><use href="#line"/></svg>railroads_1</li>
            <li><i class="tri"></i><svg><use href="#poly"/></svg>regions</li>
            <li><i class="tri"></i><svg><use href="#poly"/></svg>regions_1</li>
            <li><i class="tri"></i><svg><use href="#line"/></svg>rivers</li>
            <li class="hot"><i class="tri"></i><svg><use href="#line"/></svg>rivers_1</li>
            <li><i class="tri"></i><svg><use href="#poly"/></svg>swamp</li>
          </ul>
          <div class="scroll"><b><svg><use href="#up"/></svg></b><i class="gap1"></i><i class="thumb t1"></i><i class="rest"></i><b><svg><use href="#dd"/></svg></b></div>
        </div>
      </section>
      <div class="hsplit"></div>
      <section class="dock layers">
        <header class="title"><span class="cut13">Warstwy</span><span class="wins"><svg><use href="#float"/></svg><svg><use href="#close"/></svg></span></header>
        <div class="tools"><svg><use href="#brush"/></svg><svg><use href="#addgrp"/></svg><svg><use href="#eye"/></svg><svg><use href="#funneldd"/></svg><svg><use href="#epsf"/></svg><svg class="tiny"><use href="#dd"/></svg><svg><use href="#treedn"/></svg><svg><use href="#treeup"/></svg><svg><use href="#remove"/></svg></div>
        <div class="box">
          <ul class="lays">
            <li class="cur"><i class="chk"><svg viewBox="0 0 15 15"><path d="M3 7l3.500 5L11.500 2" fill="none" stroke="#111" stroke-width="2"/></svg></i><i class="sym pt" style="background:#875272"></i><span>Przecięcia</span><em><svg><use href="#mem"/></svg></em></li>
            <li><i class="chk"></i><i class="sym ln" style="background:#f0714f"></i><span>rivers_1</span></li>
            <li><i class="chk"></i><i class="sym pt" style="background:#7fb26b"></i><span>Przecięcia</span><em><svg><use href="#mem"/></svg></em></li>
            <li><i class="chk"></i><i class="sym ln" style="background:#7d8b8f"></i><span>majrivers</span><em><svg><use href="#q"/></svg></em></li>
            <li><i class="chk"></i><i class="sym pt" style="background:#8f5430"></i><span>popp_Bristol_Bay</span></li>
            <li><i class="chk"></i><i class="sym pt" style="background:#e2b235"></i><span>popp</span><em><svg><use href="#q"/></svg></em></li>
            <li><i class="chk"></i><i class="sym sq" style="background:#e15989"></i><span>Bufor wielopierścieniowy (stała odległość)</span><em><svg><use href="#mem"/></svg></em></li>
            <li><i class="chk"></i><i class="sym pt" style="background:#e15989"></i><span>military_airports</span><em><svg><use href="#filt"/></svg></em><em><svg><use href="#q"/></svg></em></li>
            <li><i class="chk"></i><i class="sym pt" style="background:#b7cf4c"></i><span>airports</span><em><svg><use href="#q"/></svg></em></li>
            <li><i class="chk"></i><i class="sym sq" style="background:#987db7"></i><span>alaska</span><em><svg><use href="#q"/></svg></em></li>
            <li><i class="chk"></i><i class="sym ln" style="background:#f0714f"></i><span>Przycięte</span><em><svg><use href="#mem"/></svg></em></li>
            <li><i class="chk"></i><i class="sym sq" style="background:#ff9e17"></i><span>Matanuska_Susitna</span></li>
            <li><i class="chk"></i><i class="sym sq" style="background:#c43c39"></i><span>Bristol_Bay</span></li>
            <li><i class="chk"></i><i class="sym sq" style="background:#e8718d"></i><span>regions_1</span></li>
          </ul>
          <div class="scroll"><b><svg><use href="#up"/></svg></b><i class="thumb t2"></i><i class="rest"></i><b><svg><use href="#dd"/></svg></b></div>
        </div>
      </section>
      <div class="hsplit"></div>
      <section class="dock stats">
        <header class="title"><span class="cut9">Statystyki</span><span class="wins"><svg><use href="#float"/></svg><svg><use href="#close"/></svg></span></header>
        <div class="combo"><svg class="pts" viewBox="0 0 16 26"><circle cx="0.5" cy="11" r="1.500" fill="#ccc" stroke="#888"/><circle cx="8.500" cy="7" r="1.500" fill="#ccc" stroke="#888"/></svg>Przecięcia<svg class="dd"><use href="#dd"/></svg></div>
        <div class="frow"><div class="field"><span class="abc">abc</span>exsdesc_2<i class="caret"></i><svg class="dd"><use href="#dd"/></svg></div><button class="eps">ε</button></div>
        <div class="box">
          <div class="grid">
            <div class="th">Statystyka</div><div class="th">Wartość</div>
            <div><span class="m4">Licz</span></div><div>164</div>
            <div class="alt"><span class="m8">Liczba (unikalne)</span></div><div class="alt">1</div>
            <div><span class="m8">Liczba (brakujące)</span></div><div>0</div>
            <div class="alt"><span class="m5">Minimum</span></div><div class="alt">Operational</div>
          </div>
          <div class="void"></div>
          <div class="scroll"><b><svg><use href="#up"/></svg></b><i class="thumb t3"></i><i class="rest"></i><b><svg><use href="#dd"/></svg></b></div>
        </div>
        <div class="foot"><i class="half"></i><span>Tylko zaznaczone obiekty</span><svg class="cp"><use href="#copy"/></svg><svg class="rf"><use href="#refresh"/></svg><button class="more">...<svg><use href="#dd"/></svg></button></div>
      </section>
    </div>
    <div class="vsplit"></div>
    <div class="canvas">
      <svg viewBox="546 79 930 853">
        <g class="pts-map" transform="translate(880 80) scale(.33333)">
          <circle cx="500" cy="68" r="13.500"/><circle cx="492" cy="54" r="13.500"/><circle cx="510" cy="77" r="13.500"/><circle cx="522" cy="84" r="13.500"/><circle cx="542" cy="81" r="13.500"/><circle cx="552" cy="105" r="13.500"/><circle cx="552" cy="78" r="13.500"/><circle cx="576" cy="96" r="13.500"/><circle cx="627" cy="120" r="13.500"/><circle cx="627" cy="122" r="13.500"/><circle cx="648" cy="135" r="13.500"/><circle cx="684" cy="141" r="13.500"/>
          <circle cx="318" cy="147" r="13.500"/><circle cx="261" cy="231" r="13.500"/><circle cx="261" cy="264" r="13.500"/><circle cx="255" cy="369" r="13.500"/><circle cx="264" cy="381" r="13.500"/><circle cx="234" cy="432" r="13.500"/><circle cx="234" cy="429" r="13.500"/>
          <circle cx="293" cy="578" r="13.500"/><circle cx="297" cy="582" r="13.500"/><circle cx="309" cy="600" r="13.500"/><circle cx="312" cy="606" r="13.500"/><circle cx="315" cy="612" r="13.500"/><circle cx="318" cy="636" r="13.500"/><circle cx="330" cy="672" r="13.500"/><circle cx="338" cy="684" r="13.500"/><circle cx="339" cy="687" r="13.500"/>
          <circle cx="300" cy="872" r="13.500"/><circle cx="297" cy="876" r="13.500"/><circle cx="273" cy="921" r="13.500"/><circle cx="231" cy="969" r="13.500"/><circle cx="186" cy="1086" r="13.500"/>
        </g>
        <g class="pts-map" transform="translate(900 480) scale(.33333)">
          <circle cx="60" cy="54" r="13.500"/><circle cx="42" cy="201" r="13.500"/><circle cx="54" cy="288" r="13.500"/><circle cx="63" cy="351" r="13.500"/><circle cx="66" cy="446" r="13.500"/><circle cx="69" cy="450" r="13.500"/><circle cx="75" cy="489" r="13.500"/><circle cx="84" cy="510" r="13.500"/><circle cx="90" cy="519" r="13.500"/>
          <circle cx="144" cy="558" r="13.500"/><circle cx="147" cy="563" r="13.500"/><circle cx="150" cy="570" r="13.500"/><circle cx="195" cy="573" r="13.500"/><circle cx="225" cy="570" r="13.500"/><circle cx="246" cy="579" r="13.500"/><circle cx="280" cy="585" r="13.500"/><circle cx="276" cy="583" r="13.500"/><circle cx="270" cy="582" r="13.500"/><circle cx="273" cy="621" r="13.500"/><circle cx="252" cy="630" r="13.500"/>
          <circle cx="171" cy="723" r="13.500"/><circle cx="153" cy="747" r="13.500"/><circle cx="321" cy="894" r="13.500"/><circle cx="351" cy="921" r="13.500"/><circle cx="351" cy="924" r="13.500"/><circle cx="366" cy="936" r="13.500"/><circle cx="368" cy="943" r="13.500"/><circle cx="369" cy="951" r="13.500"/><circle cx="396" cy="963" r="13.500"/><circle cx="402" cy="963" r="13.500"/><circle cx="410" cy="963" r="13.500"/><circle cx="423" cy="966" r="13.500"/>
          <circle cx="294" cy="1095" r="13.500"/><circle cx="282" cy="1155" r="13.500"/><circle cx="294" cy="1197" r="13.500"/><circle cx="294" cy="1227" r="13.500"/><circle cx="294" cy="1239" r="13.500"/><circle cx="285" cy="1296" r="13.500"/>
        </g>
      </svg>
    </div>
    <div class="vsplit"></div>
    <section class="dock proc">
      <header class="title"><span>Algorytmy Processingu</span><span class="wins"><svg><use href="#float"/></svg><svg><use href="#close"/></svg></span></header>
      <div class="tools"><svg><use href="#gears"/></svg><svg><use href="#pydd"/></svg><svg><use href="#pclock"/></svg><svg><use href="#doc"/></svg><i></i><svg><use href="#editp"/></svg><i></i><svg><use href="#wrench"/></svg></div>
      <div class="find"><svg class="mag"><use href="#search"/></svg><span>przeci</span><svg class="clr"><use href="#clear"/></svg></div>
      <ul class="algs">
        <li><svg class="tw"><use href="#dd"/></svg><svg><use href="#pclock"/></svg>Ostatnio używane</li>
        <li class="kid hot"><svg><use href="#cross"/></svg>Przecięcia linii</li>
        <li><svg class="tw"><use href="#dd"/></svg><svg><use href="#qgis"/></svg>Wektor - algebra mapowa</li>
        <li class="kid"><svg><use href="#cross"/></svg>Przecięcia linii</li>
        <li class="kid"><svg><use href="#inter"/></svg>Przecięcie (intersection)</li>
        <li><svg class="tw"><use href="#dd"/></svg><svg><use href="#qgis"/></svg>Wektor - geometria</li>
        <li class="kid wide"><svg><use href="#gear"/></svg>Podział linii geodezyjnej w linii zmiany daty</li>
      </ul>
    </section>
  </div>

  <div class="status">
    <div class="locator"><svg><use href="#search"/></svg>Szukana fraza (Ctrl+K)</div>
    <span class="lbl msg">1 legend entries removed.</span>
    <span class="lbl l1">Współrzędne</span><div class="inp coord">-168,88 73,39</div><svg class="bug"><use href="#bug"/></svg>
    <span class="lbl l2">Skala</span><div class="inp scale">1:8520021<b><svg><use href="#dd"/></svg></b></div><svg class="lock"><use href="#lock"/></svg>
    <span class="lbl l3">Powiększenie</span><div class="inp spin">100%<b><svg><use href="#up"/></svg><svg><use href="#dd"/></svg></b></div>
    <span class="lbl l4">Kąt obrotu</span><div class="inp spin rot">0,0 °<b><svg><use href="#up"/></svg><svg><use href="#dd"/></svg></b></div>
    <i class="chk"><svg viewBox="0 0 15 15"><path d="M3 7l3.500 5L11.500 2" fill="none" stroke="#111" stroke-width="2"/></svg></i>
    <span class="lbl l5">Renderuj</span><svg class="globe"><use href="#globe"/></svg><span class="lbl l6">EPSG:4326</span><svg class="bub"><use href="#bubble"/></svg>
  </div>

  <div class="taskbar">
    <div class="weather">
      <svg viewBox="0 0 30 20"><path d="M7 19.500a6 6 0 0 1-.5-12A8.500 8.500 0 0 1 22 7a6.300 6.300 0 0 1 1.500 12.500z" fill="url(#gCloud)"/><path d="M8 8q5-1 7 3 2-4 7-4-1-6-8-6.500Q8 1 8 8z" fill="#a9c6f6" opacity=".8"/></svg>
      <div><p>9°C</p><p class="dim">Pochmurnie</p></div>
    </div>
    <div class="apps">
      <span><svg viewBox="0 0 30 30"><path d="M1 1h13.500v13.500H1zM15.500 1H29v13.500H15.500zM1 15.500h13.500V29H1zM15.500 15.500H29V29H15.500z" fill="url(#gWin)"/></svg></span>
      <span><svg viewBox="0 0 30 30"><circle cx="13" cy="12.500" r="10.500" fill="#dfe9fb" stroke="#333" stroke-width="2.600"/><path d="M20.500 20.500l6.500 7" stroke="#222" stroke-width="3.600" stroke-linecap="round"/></svg></span>
      <span><svg viewBox="0 0 30 30"><path d="M0 9h22.500v20H0z" fill="url(#gDark)"/><path d="M7.500 1.500H30v19.500H7.500z" fill="#f2f2f2"/><path d="M7.500 9h15v12h-15z" fill="#9a9a9a"/></svg></span>
      <span><svg viewBox="0 0 30 30"><path d="M15 1a14 14 0 1 1-6.500 26.500L.8 29l1.700-7.500A14 14 0 0 1 15 1z" fill="url(#gChat)"/><rect x="7" y="9.500" width="11.500" height="11" rx="1.500" fill="#fff"/><path d="M19.500 13.500l3.500-3v9l-3.500-3z" fill="#fff"/></svg></span>
      <span class="run"><svg viewBox="0 0 30 30"><path d="M0 4q0-2 2-2h7l3.500 3H28v8H0z" fill="#dd9d06"/><path d="M0 7h11l3-1.500h16V27q0 1.500-1.500 1.500H0z" fill="url(#gFold)"/><path d="M5 28.500V23q0-2 2-2h16q2 0 2 2v5.500z" fill="#1480d4"/><path d="M9 24.500h12" stroke="#0b4f93" stroke-width="1.200"/></svg></span>
      <span class="run"><svg viewBox="0 0 30 30"><circle cx="15" cy="15" r="15" fill="#fbc116"/><path d="M15 15L2 7.500A15 15 0 0 1 28 7.500H15z" fill="#e33b2e"/><path d="M2 7.500A15 15 0 0 0 15 30l6.500-11.500L15 15 8.500 18.700z" fill="#249a41"/><path d="M2 7.500l6.500 11.200L15 8z" fill="#249a41"/><path d="M2 7.500Q8 0 15 0t13 7.500H15q-4 0-6.500 4.500z" fill="#e33b2e"/><circle cx="15" cy="15" r="7" fill="#fff"/><circle cx="15" cy="15" r="5.500" fill="#3a7ff0"/></svg></span>
      <span><svg viewBox="0 0 30 30"><path d="M0 10.500L15 1l15 9.500V16H0z" fill="#0b5eb0"/><path d="M3 10.500h24L15 20z" fill="#f3f0ee"/><path d="M0 10.500l15 9-15 9z" fill="#1b9be4"/><path d="M30 10.500L0 29h30z" fill="#40c9f5"/><path d="M0 11l15 9L30 29H0z" fill="#2ba6ea"/><path d="M15 20l15-9v18z" fill="#48cbf6"/></svg></span>
      <span><svg viewBox="0 0 30 30"><path d="M15 1l12.500 7v14L15 29 2.500 22V8z" fill="#222834" stroke="#7d8492"/><circle cx="14.500" cy="7" r="5" fill="#4a5262"/><path d="M15.500 13.500L24 10l-6 6z" fill="#2e86ea"/><path d="M5.500 19l10-5.500L18 16z" fill="#cfd4dc"/></svg></span>
      <span class="act"><svg><use href="#qgis"/></svg></span>
    </div>
    <div class="tray">
      <svg viewBox="0 0 20 20"><path d="M2 14l8-8.500 8 8.500" fill="none" stroke="#222" stroke-width="1.500"/></svg>
      <svg viewBox="0 0 20 20"><path d="M3 14a4.500 4.500 0 0 1 1-7q3-5 8-2.500t3 3q4 1 4 6z" fill="#8b8b8b" stroke="#444"/><path d="M3 14a4 4 0 0 1 3-6l8 6z" fill="#555"/><circle cx="14" cy="14" r="5.500" fill="#d1262e"/><path d="M12 12l4 4M16 12l-4 4" stroke="#fff" stroke-width="1.300"/></svg>
      <svg viewBox="0 0 20 20"><path d="M1 8q9-8 18 0M4 11q6-5.500 12 0M7 14q3-2.800 6 0" fill="none" stroke="#222" stroke-width="1.500"/><circle cx="10" cy="16" r="1.500" fill="#222"/></svg>
      <svg viewBox="0 0 20 20"><path d="M1 7.500h3.500L9 3v14l-4.500-4.500H1zM13 7.500l5 5M18 7.500l-5 5" fill="none" stroke="#222" stroke-width="1.200"/></svg>
      <svg viewBox="0 0 20 20"><path d="M6 5h11v11H2V9M18.500 8.500v4" fill="none" stroke="#222" stroke-width="1.400"/><path d="M4.500 0L1 6.500h2.500L2 11l4.500-6.500H4z" fill="#222"/></svg>
      <div class="clock"><p>12:29</p><p>06.11.2022</p></div>
    </div>
  </div>
</div>
</body>
</html>
```

FILE: styles.css
```css
* { box-sizing: border-box; }
html, body { margin: 0; height: 100%; overflow: hidden; }
body { font: 14px/22px "Open Sans", "Noto Sans", sans-serif; color: #111; background: #f0f0f0; white-space: nowrap; }
ul, p { margin: 0; padding: 0; list-style: none; }
i, em { font-style: normal; flex: none; }
svg { display: block; flex: none; }
.paints { position: absolute; width: 0; height: 0; }
.symbols { display: none; }
.screen { width: 1907px; height: 1025px; display: flex; flex-direction: column; overflow: hidden; }

/* toolbars */
.toolbar { height: 38px; flex: none; display: flex; align-items: center; padding-left: 1.5px; background: linear-gradient(#f8f8f8, #eeeeee); border-bottom: 1px solid #b4b4b4; }
.toolbar + .toolbar { height: 40px; border-bottom: 2px solid #b9b9b9; }
.tb { width: 33px; height: 32px; flex: none; display: flex; align-items: center; justify-content: center; border: 1px solid transparent; }
.tb svg { width: 24px; height: 24px; }
.tb.on { background: #dbdbdb; border-color: #ababab; border-radius: 3px; width: 32px; margin-right: 1px; }
.tb.off svg { opacity: .38; filter: grayscale(.8); }
.drop { width: 15px; flex: none; display: flex; justify-content: center; }
.drop svg { width: 10px; height: 6px; }
.drop.mid { opacity: .6; }
.grip { width: 4px; height: 17px; margin: 0 5px 0 9px; background: radial-gradient(circle, #aaa 0.8px, transparent 1px) 0 0 / 4px 3px; }
.vsep { width: 1px; height: 19px; margin: 0 4px 0 3px; background: #cfcfcf; }

/* main area */
.main { flex: none; height: 855px; display: flex; }
.left { width: 538px; flex: none; display: flex; flex-direction: column; overflow: hidden; }
.dock { flex: none; display: flex; flex-direction: column; }
.title { height: 21px; flex: none; display: flex; justify-content: space-between; line-height: 20px; }
.wins { display: flex; gap: 3px; padding: 2px 2px 0 0; }
.wins svg { width: 11px; height: 11px; }
.cut8 { margin-left: -8px; }
.cut13 { margin-left: -6px; }
.cut9 { margin-left: -7px; }
.tools { flex: none; height: 28px; display: flex; align-items: center; gap: 9px; padding-bottom: 4px; }
.tools svg { width: 16px; height: 16px; }
.left .tools { margin-left: -6px; }
.tools .tiny { width: 10px; height: 6px; margin: 0 0 0 -2px; }
.box { flex: 1; display: flex; min-height: 0; background: #fff; border: 1px solid #b5b5b5; border-left: 0; }
.browser { height: 198px; }
.hsplit { flex: none; height: 8px; background: radial-gradient(circle, #aaa .8px, transparent 1px) 256px 2px / 3px 3px; background-repeat: repeat-x; clip-path: inset(0 266px 0 256px); }
.layers { height: 360px; }
.layers .tools { height: 29px; padding-bottom: 6px; }
.tree { flex: 1; overflow: hidden; padding-top: 1px; }
.tree li { height: 22px; display: flex; align-items: center; padding-left: 45px; color: #000; }
.tree svg { width: 19px; height: 19px; margin: 0 7px 0 9px; color: #8c8c8c; }
.tri { border: 5px solid transparent; border-left-color: #555; border-right: 0; }
.tree .hot { width: 277px; background: #efefef; }
.tree .hot svg { color: #5c88a8; }

.scroll { width: 17px; flex: none; display: flex; flex-direction: column; background: #e4e4e4; border-left: 1px solid #b5b5b5; }
.scroll b { height: 16px; flex: none; display: flex; align-items: center; justify-content: center; background: #fafafa; }
.scroll b:last-child { border-top: 1px solid #b5b5b5; }
.scroll b svg { width: 9px; height: 6px; }
.gap1 { height: 38px; border-top: 1px solid #b5b5b5; }
.thumb { background: linear-gradient(90deg, #fff, #f4f4f4); border: solid #b5b5b5; border-width: 1px 0; }
.t1 { height: 34px; }
.t2 { height: 177px; }
.t3 { height: 42px; }
.rest { flex: 1; }

.lays { flex: 1; overflow: hidden; }
.lays li { height: 22px; display: flex; align-items: center; padding: 0 8px 0 16px; font-size: 15.2px; font-weight: 700; font-style: italic; color: #808080; }
.lays .cur { background: #efefef; color: #000; font-size: 14px; font-style: normal; text-decoration: underline; }
.lays span { flex: 1; margin-left: 6px; }
.chk { width: 17px; height: 17px; background: #fff; border: 1px solid #aaa; }
.chk svg { width: 15px; height: 15px; }
.sym { margin-left: 6px; width: 19px; }
.sym.pt { width: 10px; height: 10px; border: 1px solid #333; border-radius: 50%; margin: 0 5px 0 11px; }
.sym.ln { height: 2px; }
.sym.sq { height: 19px; border: 1px solid #444; }
.lays em { width: 19px; height: 19px; margin-left: 3px; display: flex; align-items: center; justify-content: center; background: #f6f6f6; border: 1px solid #ddd; border-radius: 3px; }
.lays em svg { width: 15px; height: 15px; color: #808080; }
.lays .cur em svg { color: #7095b5; }

/* statistics */
.stats { height: 281px; }
.stats .title { height: 18px; }
.combo { height: 28px; flex: none; display: flex; align-items: center; border: 1px solid #a9a9a9; border-left: 0; border-radius: 0 3px 3px 0; background: linear-gradient(#fcfcfc, #ededed); font-size: 12.2px; }
.pts { width: 16px; height: 26px; }
.dd { width: 10px; height: 6px; margin: 0 9px 0 auto; }
.frow { height: 27px; flex: none; margin: 3px 0; display: flex; gap: 7px; }
.field { flex: 1; display: flex; align-items: center; background: #fff; border: 1px solid #3da5ee; border-left: 0; border-radius: 0 3px 3px 0; font-size: 12.2px; box-shadow: inset 0 0 0 .5px #3da5ee; }
.abc { margin: -4px 5px 0 -10px; font-size: 11.5px; font-weight: 700; color: #666; }
.caret { width: 1px; height: 16px; background: #000; }
.eps, .more { border: 1px solid #a9a9a9; border-radius: 3px; background: linear-gradient(#fdfdfd, #f0f0f0); padding: 0; }
.eps { width: 28px; font: 700 27px/18px "Liberation Serif", serif; color: #6c3a78; padding-bottom: 5px; }
.stats .box { height: 172px; flex: none; overflow: hidden; }
.grid { width: 219px; flex: none; display: grid; grid-template-columns: 133px 86px; grid-template-rows: 24px repeat(4, 37px); }
.grid div { border: solid #bdbdbd; border-width: 0 1px 1px 0; padding-left: 3px; line-height: 37px; }
.grid .th { padding: 0; text-align: center; line-height: 25px; background: linear-gradient(#fbfbfb, #efefef); }
.grid .th:first-child { padding-right: 13px; }
.grid .alt { background: #e8e7e3; }
.grid div:nth-child(odd) { padding-left: 0; }
.m4 { margin-left: -7px; }
.m8 { margin-left: -7px; }
.m5 { margin-left: -9px; }
.void { flex: 1; background: linear-gradient(#f0f0f0 24px, #fff 24px); }
.foot { flex: 1; display: flex; align-items: center; padding-top: 3px; font-size: 12.2px; }
.half { width: 4px; height: 17px; margin-right: 6px; border: 1px solid #aaa; border-left: 0; background: #fff; }
.cp { width: 16px; height: 18px; margin-left: auto; }
.rf { width: 19px; height: 19px; margin: 0 8px 0 14px; }
.more { width: 27px; height: 23px; display: flex; align-items: center; justify-content: flex-end; font: 700 12px/14px "Open Sans", sans-serif; padding: 4px 1px 0 0; }
.more svg { width: 8px; height: 5px; margin-left: -3px; }

/* map */
.vsplit { width: 7px; flex: none; background: radial-gradient(circle, #aaa .8px, transparent 1px) 3px 0 / 3px 3px; background-repeat: repeat-y; clip-path: inset(419px 0 419px 0); }
.canvas { width: 932px; flex: none; border: 1px solid #b5b5b5; border-top: 0; background: #fff; }
.canvas svg { width: 930px; height: 853px; margin-top: 1px; }
.pts-map { fill: #c43c39; stroke: #232323; stroke-width: 2.600; }

/* processing */
.proc { width: 423px; height: 855px; }
.proc .title span:first-child { margin-left: 4px; letter-spacing: .1px; }
.proc .tools { padding-left: 8px; gap: 8px; }
.proc .tools svg { width: 17px; height: 17px; }
.proc .tools i { width: 1px; height: 12px; background: #ccc; margin: 0 -1px; }
.find { height: 27px; flex: none; display: flex; align-items: center; background: #fff; border: 1px solid #a9a9a9; border-radius: 3px; font-size: 12.2px; padding: 0 8px 0 10px; }
.mag { width: 15px; height: 15px; }
.find span { flex: 1; margin-left: 8px; }
.clr { width: 17px; height: 13px; }
.algs { flex: 1; background: #fff; border: 1px solid #b5b5b5; border-top: 0; padding-top: 1px; }
.algs li { height: 22px; display: flex; align-items: center; padding-left: 8px; color: #000; letter-spacing: .15px; }
.algs .wide { letter-spacing: .25px; }
.algs svg { width: 18px; height: 18px; margin-right: 7px; color: #707070; }
.algs .tw { width: 9px; height: 6px; margin: 0 12px 0 0; }
.algs .kid { padding-left: 54px; }
.algs .hot { background: #efefef; }
.algs .hot svg { color: #3f7394; }

/* status bar */
.status { height: 32px; flex: none; display: flex; align-items: center; font-size: 12.2px; padding-top: 1px; border-bottom: 1px solid #aab0bd; }
.locator { width: 223px; height: 26px; display: flex; align-items: center; border: 1px solid #a9a9a9; border-left: 0; border-radius: 0 3px 3px 0; background: #fff; color: #888; }
.locator svg { width: 15px; height: 15px; margin: 0 9px 0 1px; }
.lbl { flex: none; padding-top: 3px; }
.msg { margin-left: 8px; width: 731px; }
.inp { height: 25px; flex: none; display: flex; align-items: center; background: #fff; border: 1px solid #a9a9a9; border-radius: 3px; padding-left: 5px; }
.coord { width: 94px; }
.l1 { width: 78px; }
.bug { width: 20px; height: 20px; margin: -4px 13px 0 4px; }
.l2 { width: 35px; }
.scale { width: 93px; padding-left: 3px; }
.inp b { margin-left: auto; align-self: stretch; display: flex; align-items: center; }
.scale b { width: 25px; padding-left: 6px; background: linear-gradient(#fcfcfc, #eee); }
.inp b svg { width: 10px; height: 6px; }
.lock { width: 16px; height: 20px; margin: 0 9px 0 12px; }
.l3 { width: 79px; }
.spin { width: 92px; }
.spin b { width: 17px; flex-direction: column; justify-content: space-evenly; border-left: 1px solid #b5b5b5; background: #f8f8f8; }
.l4 { margin-left: 10px; width: 68px; }
.rot { width: 88px; }
.status .chk { margin: 0 6px 0 7px; }
.l5 { width: 67px; }
.globe { width: 20px; height: 20px; margin-right: 2px; }
.l6 { width: 87px; }
.bub { width: 20px; height: 19px; }

/* taskbar */
.taskbar { flex: 1; display: flex; align-items: center; background: linear-gradient(90deg, #e2eff8 0, #e0edf9 330px, #d3e2fb 450px, #d6dbf5 580px, #d3e3fb 740px, #d6def7 960px, #d8dcf0 1080px, #d6e1fa 1240px, #d9dcef 1380px, #dfecf7 1520px, #e2eef8 1907px); }
.weather { width: 693px; display: flex; align-items: center; padding-left: 12px; gap: 9px; font-size: 14px; line-height: 19.5px; padding-bottom: 1px; }
.weather svg { width: 30px; height: 20px; }
.dim { color: #555f6b; }
.apps { display: flex; align-items: center; padding: 1px 0 0 11px; gap: 7px; }
.apps span { width: 48px; height: 48px; display: flex; align-items: center; justify-content: center; position: relative; border-radius: 4px; }
.apps svg { width: 30px; height: 30px; }
.apps .act { background: #eceff9; }
.run::after, .act::after { content: ""; position: absolute; bottom: 0; width: 8px; height: 4px; border-radius: 2px; background: #80838f; }
.act::after { width: 20px; background: #0a78d4; }
.tray { margin-left: auto; display: flex; align-items: center; padding: 0 19px 1px 0; font-size: 13px; }
.tray svg { width: 20px; height: 20px; margin-right: 10px; }
.tray svg:nth-child(1) { width: 18px; height: 18px; margin-right: 11px; }
.tray svg:nth-child(2) { margin-right: 15px; }
.clock { margin-left: 11px; text-align: right; line-height: 19.5px; }
```
